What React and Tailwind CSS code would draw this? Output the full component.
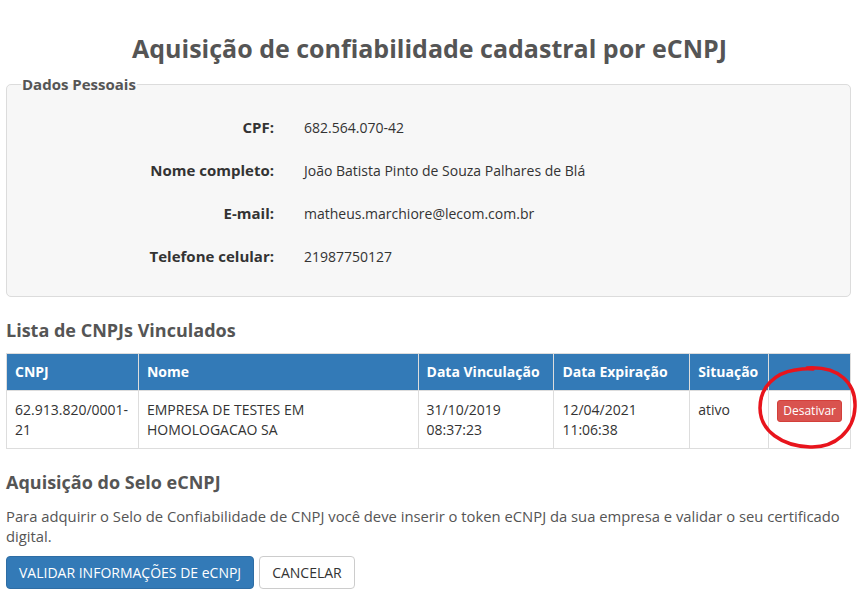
const rows = [
    { label: 'CPF:', value: '682.564.070-42' },
    { label: 'Nome completo:', value: 'João Batista Pinto de Souza Palhares de Blá' },
    { label: 'E-mail:', value: 'matheus.marchiore@lecom.com.br' },
    { label: 'Telefone celular:', value: '21987750127' },
];

const App = () => {
    return (
        <div className="bg-white min-h-[591px] pl-[6px] pr-[9px] text-[14px] text-[#333]" style={{ fontFamily: '"Open Sans", sans-serif' }}>
            <h1 className="pt-[30px] text-center text-[25px] leading-[36px] font-bold text-[#555] pl-[2px]">
                Aquisição de confiabilidade cadastral por eCNPJ
            </h1>

            <fieldset className="mt-[8px] border border-[#dcdcdc] rounded-[5px] bg-[#f7f7f7] pt-[12px] pb-[18px]">
                <legend className="ml-[14px] px-[1px] font-bold text-[15px] leading-[20px] text-[#555]">Dados Pessoais</legend>
                {rows.map((r) => (
                    <div key={r.label} className="grid grid-cols-[267px_1fr] gap-x-[30px] h-[43px] items-center">
                        <span className="text-right font-bold text-[15px] text-[#333]">{r.label}</span>
                        <span className="text-[#333]">{r.value}</span>
                    </div>
                ))}
            </fieldset>

            <h3 className="mt-[20px] text-[18px] leading-[26px] font-bold text-[#555]">Lista de CNPJs Vinculados</h3>

            <div className="relative mt-[10px]">
                <table className="w-full border-collapse text-left text-[14px] leading-[20px]">
                    <thead>
                        <tr className="bg-[#337ab7] text-white">
                            <th className="w-[132px] h-[37px] px-[8px] border border-[#ddd] font-bold">CNPJ</th>
                            <th className="w-[280px] px-[8px] border border-[#ddd] font-bold">Nome</th>
                            <th className="w-[136px] px-[8px] border border-[#ddd] font-bold">Data Vinculação</th>
                            <th className="w-[136px] px-[8px] border border-[#ddd] font-bold">Data Expiração</th>
                            <th className="w-[79px] px-[8px] border border-[#ddd] font-bold">Situação</th>
                            <th className="px-[8px] border border-[#ddd]"></th>
                        </tr>
                    </thead>
                    <tbody>
                        <tr className="align-top text-[#333]">
                            <td className="px-[8px] pt-[9px] pb-[8px] h-[58px] border border-[#ddd]">62.913.820/0001-21</td>
                            <td className="px-[8px] pt-[9px] pb-[8px] border border-[#ddd]">EMPRESA DE TESTES EM HOMOLOGACAO SA</td>
                            <td className="px-[8px] pt-[9px] pb-[8px] border border-[#ddd]">31/10/2019 08:37:23</td>
                            <td className="px-[8px] pt-[9px] pb-[8px] border border-[#ddd]">12/04/2021 11:06:38</td>
                            <td className="px-[8px] pt-[9px] pb-[8px] border border-[#ddd]">ativo</td>
                            <td className="px-[8px] pt-[9px] pb-[8px] border border-[#ddd]">
                                <button className="block bg-[#d9534f] border border-[#d43f3a] text-white text-[12px] leading-[18px] px-[5px] py-[1px] rounded-[3px]">Desativar</button>
                            </td>
                        </tr>
                    </tbody>
                </table>
                <svg className="absolute left-[749px] top-[10px] pointer-events-none" width="106" height="88" viewBox="0 0 106 88">
                    <path d="M52 5 C 84 3, 101 20, 100 44 C 99 68, 80 85, 55 84 C 27 83, 5 68, 5 45 C 5 24, 20 10, 40 7 C 46 6, 50 5, 58 6" fill="none" stroke="#e8141c" strokeWidth="3.5" strokeLinecap="round" />
                </svg>
            </div>

            <h3 className="mt-[20px] text-[18px] leading-[26px] font-bold text-[#555]">Aquisição do Selo eCNPJ</h3>
            <p className="mt-[11px] -mr-[6px] text-[14.8px] text-[#555] leading-[20px]">
                Para adquirir o Selo de Confiabilidade de CNPJ você deve inserir o token eCNPJ da sua empresa e validar o seu certificado digital.
            </p>
            <div className="mt-[10px] flex gap-[5px]">
                <button className="h-[33px] px-[12px] bg-[#337ab7] border border-[#2e6da4] rounded-[4px] text-white text-[14px]">VALIDAR INFORMAÇÕES DE eCNPJ</button>
                <button className="h-[33px] px-[12px] bg-white border border-[#ccc] rounded-[4px] text-[#333] text-[14px]">CANCELAR</button>
            </div>
        </div>
    );
};

export default App;
